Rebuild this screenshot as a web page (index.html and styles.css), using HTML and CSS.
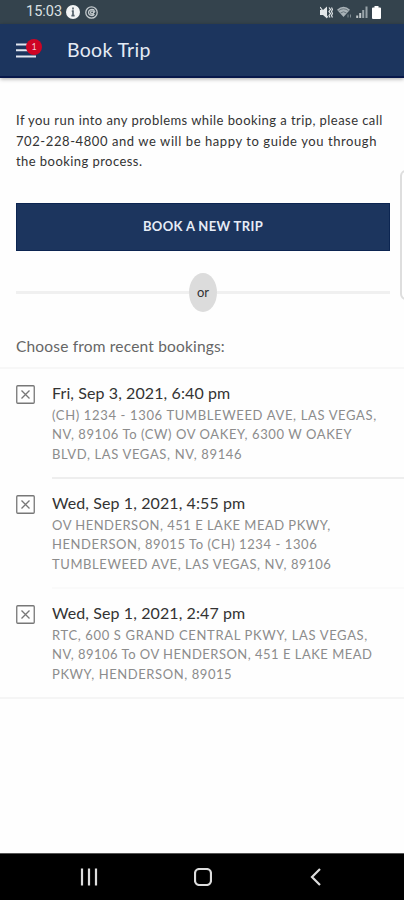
FILE: index.html
```html
<!DOCTYPE html>
<html lang="en">
<head>
  <meta charset="UTF-8">
  <title>Book Trip</title>
  <link rel="stylesheet" href="styles.css">
</head>
<body>
  <div class="status-bar">
    <span class="clock">15:03</span>
    <svg class="info" width="14" height="14" viewBox="0 0 14 14">
      <circle cx="7" cy="7" r="7" fill="#f2f4f5"/>
      <path d="M7 2.6v2M5.8 6.2H7v4.2M5.4 10.6h3.2" fill="none" stroke="#53606a" stroke-width="1.7"/>
    </svg>
    <svg class="swirl" width="13" height="13" viewBox="0 0 13 13" fill="none" stroke="#c3cacd" stroke-width="1.3">
      <circle cx="6.5" cy="6.5" r="5.7"/>
      <path d="M9.5 4.6C7.8 2.4 3.6 3.4 3.6 6.4c0 3.3 4.6 4 5.7 1.7M8.6 6.4c0-2-3-2-3 .1 0 1.7 2.4 1.7 3 .2l1.500-1.500"/>
    </svg>
    <div class="signals">
      <svg width="13" height="13" viewBox="0 0 13 13">
        <path d="M0 4h3l4-3.500v12L3 9H0z" fill="#e3e7e9"/>
        <path d="M0 1l8 10.500M9 1.500l1.500 2L9 5.500l1.500 2L9 9.500l1 2M11.500 1.500l1 2-1 2 1 2-1 2 1 2" fill="none" stroke="#dfe4e6" stroke-width="1.2"/>
      </svg>
      <svg width="15" height="13" viewBox="0 0 15 13">
        <path d="M0 3.700Q6.500-2 13 3.700L6.500 11z" fill="#a9b2b7"/>
        <path d="M1.500 4.800q5-4 10 0M3.500 7q3-2.500 6 0" fill="none" stroke="#6c7980" stroke-width="1"/>
        <path d="M11 8.500v3M13.500 8.500v3" stroke="#7e8b92" stroke-width="1"/>
      </svg>
      <svg width="12" height="12" viewBox="0 0 12 12" stroke-width="2">
        <path d="M1.200 12V9.500M4.200 12V7" stroke="#c0c7ca"/>
        <path d="M7.200 12V4M10.500 12V.5" stroke="#98a3a9"/>
      </svg>
      <svg width="9" height="13" viewBox="0 0 9 13">
        <path d="M2.500 0h4v1.500H8q1 0 1 1V12q0 1-1 1H1q-1 0-1-1V2.500q0-1 1-1h1.500z" fill="#fff"/>
      </svg>
    </div>
  </div>

  <header class="header">
    <div class="menu">
      <svg width="20" height="15" viewBox="0 0 20 15">
        <path d="M0 1.500h20M0 7.300h20M0 13.500h20" stroke="#e1e6f0" stroke-width="2"/>
      </svg>
      <span class="badge">1</span>
    </div>
    <h1>Book Trip</h1>
  </header>

  <main>
    <p class="intro">
      If you run into any problems while booking a trip, please call<br>
      <span class="loose">702-228-4800 and we will be happy to guide you through</span><br>
      the booking process.
    </p>
    <button class="book" type="button">BOOK A NEW TRIP</button>
    <div class="or"><span>or</span></div>
    <h2>Choose from recent bookings:</h2>

    <ul class="bookings">
      <li>
        <svg class="box" width="19" height="19" viewBox="0 0 19 19">
          <rect x=".75" y=".75" width="17.500" height="17.500" rx="1"/>
          <path d="M5.500 5.500l8 8M13.500 5.500l-8 8"/>
        </svg>
        <div class="trip">
          <h3>Fri, Sep 3, 2021, 6:40 pm</h3>
          <p><span class="loose">(CH) 1234 - 1306 TUMBLEWEED AVE, LAS VEGAS,</span><br>NV, 89106 To (CW) OV OAKEY, 6300 W OAKEY<br><span class="loose">BLVD, LAS VEGAS, NV, 89146</span></p>
        </div>
      </li>
      <li>
        <svg class="box" width="19" height="19" viewBox="0 0 19 19">
          <rect x=".75" y=".75" width="17.500" height="17.500" rx="1"/>
          <path d="M5.500 5.500l8 8M13.500 5.500l-8 8"/>
        </svg>
        <div class="trip light">
          <h3>Wed, Sep 1, 2021, 4:55 pm</h3>
          <p><span class="tight">OV HENDERSON, 451 E LAKE MEAD PKWY,</span><br>HENDERSON, 89015 To (CH) 1234 - 1306<br>TUMBLEWEED AVE, LAS VEGAS, NV, 89106</p>
        </div>
      </li>
      <li>
        <svg class="box" width="19" height="19" viewBox="0 0 19 19">
          <rect x=".75" y=".75" width="17.500" height="17.500" rx="1"/>
          <path d="M5.500 5.500l8 8M13.500 5.500l-8 8"/>
        </svg>
        <div class="trip">
          <h3>Wed, Sep 1, 2021, 2:47 pm</h3>
          <p><span class="loose">RTC, 600 S GRAND CENTRAL PKWY, LAS VEGAS,</span><br><span class="tight">NV, 89106 To OV HENDERSON, 451 E LAKE MEAD</span><br>PKWY, HENDERSON, 89015</p>
        </div>
      </li>
    </ul>
  </main>

  <!-- edge panel handle -->
  <div class="edge"></div>

  <nav class="nav-bar">
    <svg width="18" height="18" viewBox="0 0 18 18">
      <path d="M2 .5v17M9 .5v17M16 .5v17"/>
    </svg>
    <svg width="18" height="18" viewBox="0 0 18 18">
      <rect x="1" y="1" width="16" height="16" rx="4.500"/>
    </svg>
    <svg width="18" height="18" viewBox="0 0 18 18">
      <path d="M13 1L5 9l8 8"/>
    </svg>
  </nav>
</body>
</html>
```

FILE: styles.css
```css
* {
  box-sizing: border-box;
}

body {
  position: relative;
  display: flex;
  flex-direction: column;
  width: 404px;
  height: 900px;
  margin: 0;
  overflow: hidden;
  background: #fefefe;
  color: #333;
  font-family: Lato, "Open Sans", sans-serif;
}

h1, h2, h3, p, ul {
  margin: 0;
  padding: 0;
  font-weight: normal;
  white-space: nowrap;
}

.status-bar {
  display: flex;
  align-items: center;
  height: 24px;
  padding: 0 23px 0 26px;
  background: #34434d;
}

.clock {
  width: 35px;
  color: #dce1e3;
  font: 14.5px/24px Roboto, sans-serif;
}

.info {
  margin-left: 5px;
}

.swirl {
  margin-left: 5px;
}

.signals {
  display: flex;
  align-items: center;
  gap: 4px;
  margin-left: auto;
}

.header {
  display: flex;
  align-items: center;
  height: 54px;
  padding: 0 16px;
  border-bottom: 2px solid #07184a;
  background: #1c355e;
  box-shadow: 0 1px 4px rgba(0, 0, 0, .35);
}

.menu {
  position: relative;
  width: 51px;
  height: 15px;
}

.menu svg {
  display: block;
}

.badge {
  position: absolute;
  top: -4px;
  left: 10px;
  width: 16px;
  height: 16px;
  border-radius: 50%;
  background: #cf0424;
  color: #f2cbd2;
  font-size: 9px;
  line-height: 16px;
  text-align: center;
}

h1 {
  color: #e4eaf4;
  font-size: 19.5px;
  line-height: 24px;
  letter-spacing: .3px;
}

main {
  flex: 1;
  padding-top: 32px;
}

.intro {
  margin-left: 16px;
  font-size: 13px;
  line-height: 20.5px;
  letter-spacing: .44px;
}

.intro .loose {
  letter-spacing: .58px;
}

.book {
  display: block;
  width: 374px;
  height: 48px;
  margin: 31.5px 0 0 16px;
  padding: 0 0 2px;
  border: 1px solid #0c2551;
  background: #1c355e;
  color: #e6ecf6;
  font: bold 13px Lato, sans-serif;
  letter-spacing: .35px;
}

.or {
  display: flex;
  align-items: center;
  width: 374px;
  height: 39px;
  margin: 22px 0 0 16px;
}

.or::before,
.or::after {
  content: "";
  flex: 1;
  height: 3px;
  background: #f0f0f0;
}

.or span {
  width: 28px;
  height: 39px;
  border-radius: 50%;
  background: #dcdcdc;
  font-size: 13px;
  line-height: 39px;
  text-align: center;
}

h2 {
  margin: 22px 0 0 16px;
  color: #666;
  font-size: 15.5px;
  line-height: 24px;
  letter-spacing: .18px;
}

.bookings {
  margin-top: 9px;
  border-top: 2px solid #f7f7f7;
  border-bottom: 2px solid #f5f5f5;
  list-style: none;
}

.bookings li {
  display: flex;
  height: 110px;
  padding-left: 16px;
}

.bookings li:last-child {
  height: 108px;
}

.box {
  flex: none;
  margin: 16px 17px 0 0;
  fill: none;
  stroke: #777;
  stroke-width: 1.3;
}

.trip {
  flex: 1;
  padding-top: 13px;
  border-bottom: 2px solid #eee;
}

.trip.light {
  border-color: #fafafa;
}

li:last-child .trip {
  border: 0;
}

h3 {
  font-size: 16px;
  line-height: 22px;
  letter-spacing: .1px;
}

.trip p {
  padding-top: 1.5px;
  color: #8c8c8c;
  font-size: 13px;
  line-height: 19.5px;
  letter-spacing: .58px;
}

.trip .loose {
  letter-spacing: .65px;
}

.trip .tight {
  letter-spacing: .49px;
}

.edge {
  position: absolute;
  top: 170px;
  right: -8px;
  width: 12px;
  height: 130px;
  border: 2px solid #dedede;
  border-radius: 6px;
  background: #fff;
}

.nav-bar {
  display: flex;
  align-items: center;
  justify-content: center;
  gap: 95.5px;
  height: 47px;
  padding-left: 1px;
  border-top: 1px solid #555;
  background: #000;
}

.nav-bar svg {
  fill: none;
  stroke: #ddd;
  stroke-width: 2.2;
}
```
